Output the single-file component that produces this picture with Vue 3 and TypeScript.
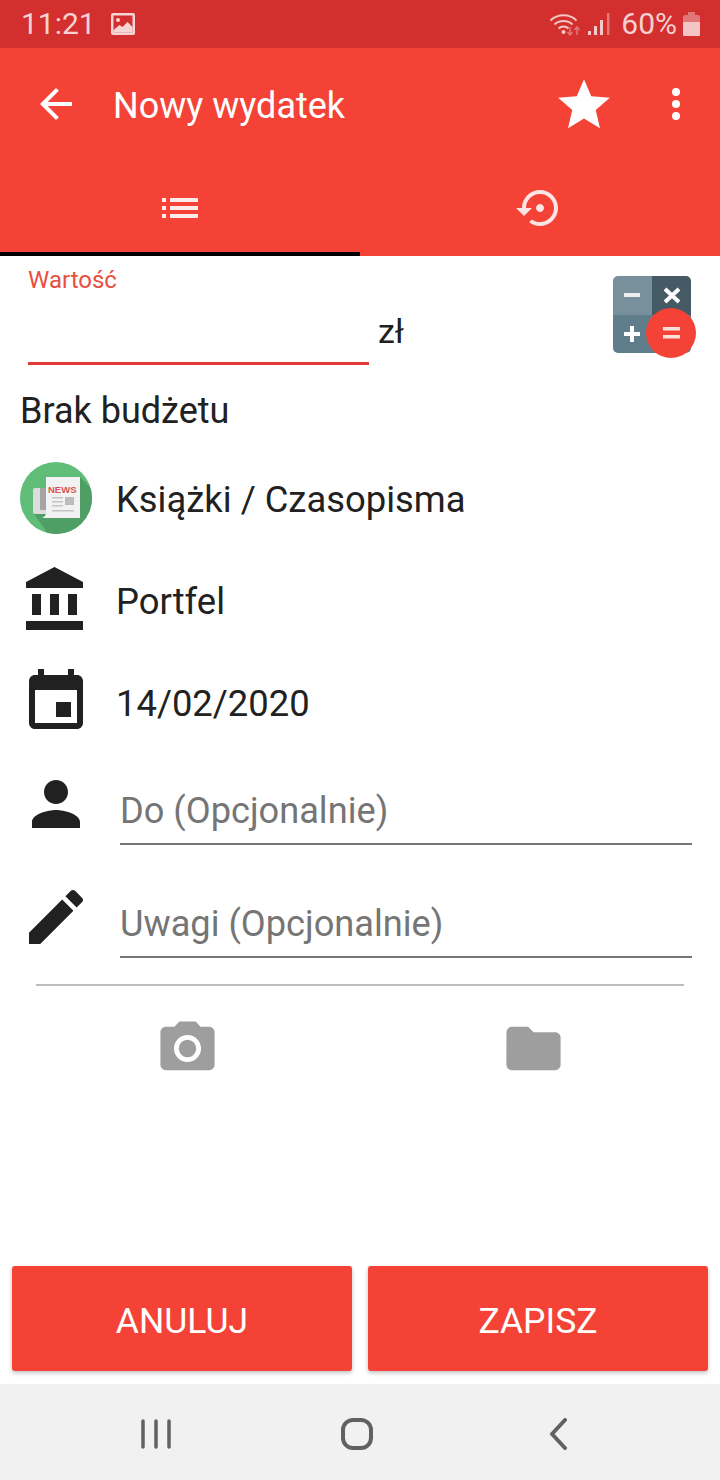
<script setup lang="ts">
interface DetailRow {
  label: string
  icon: string
}

const rows: DetailRow[] = [
  {
    label: 'Portfel',
    icon: 'M4 10v7h3v-7H4zm6 0v7h3v-7h-3zM2 22h19v-3H2v3zm14-12v7h3v-7h-3zm-4.5-9L2 6v2h19V6l-9.5-5z',
  },
  {
    label: '14/02/2020',
    icon: 'M17 12h-5v5h5v-5zM16 1v2H8V1H6v2H5c-1.11 0-1.99.9-1.99 2L3 19c0 1.1.89 2 2 2h14c1.1 0 2-.9 2-2V5c0-1.1-.9-2-2-2h-1V1h-2zm3 18H5V8h14v11z',
  },
]

const fields: DetailRow[] = [
  {
    label: 'Do (Opcjonalnie)',
    icon: 'M12 12c2.21 0 4-1.79 4-4s-1.79-4-4-4-4 1.79-4 4 1.79 4 4 4zm0 2c-2.67 0-8 1.34-8 4v2h16v-2c0-2.66-5.33-4-8-4z',
  },
  {
    label: 'Uwagi (Opcjonalnie)',
    icon: 'M3 17.25V21h3.75L17.81 9.94l-3.75-3.75L3 17.25zM20.71 7.04c.39-.39.39-1.02 0-1.41l-2.34-2.34c-.39-.39-1.02-.39-1.41 0l-1.83 1.83 3.75 3.75 1.83-1.83z',
  },
]
</script>

<template>
  <div class="page">
    <div class="status-bar">
      <span class="status-text">11:21</span>
      <svg class="status-pic" width="24" height="22" viewBox="0 0 24 22">
        <rect x="0" y="0" width="24" height="22" rx="2" fill="#fff" fill-opacity=".8" />
        <rect x="2.5" y="2.5" width="19" height="17" fill="#d32f2f" />
        <circle cx="7" cy="7" r="2" fill="#fff" fill-opacity=".8" />
        <path d="M2.5 17l6-5 3 2 5-5 5 5v5.5h-19z" fill="#fff" fill-opacity=".8" />
      </svg>
      <div class="status-right">
        <svg width="32" height="24" viewBox="0 0 32 24" fill="none">
          <path d="M1.5 8.5c7-7 19-7 26 0M5.5 12.5c4.8-4.6 13.2-4.6 18 0M9.5 16.5c2.8-2.6 7.2-2.6 10 0" stroke="#fff" stroke-opacity=".72" stroke-width="2" />
          <circle cx="14.500" cy="20" r="2" fill="#fff" fill-opacity=".75" />
          <path d="M21 15v8m-2.500-3l2.500 3 2.500-3" stroke="#fff" stroke-opacity=".35" stroke-width="1.500" />
          <path d="M28 23v-8m-2.500 3l2.500-3 2.500 3" stroke="#fff" stroke-opacity=".35" stroke-width="1.500" />
        </svg>
        <svg class="status-signal" width="24" height="24" viewBox="0 0 24 24">
          <rect x="1" y="19" width="3" height="4" fill="#fff" fill-opacity=".75" />
          <rect x="7" y="14" width="3" height="9" fill="#fff" fill-opacity=".75" />
          <rect x="13" y="8" width="3" height="15" fill="#fff" fill-opacity=".75" />
          <rect x="20" y="1" width="2.500" height="22" fill="#fff" fill-opacity=".35" />
        </svg>
        <span class="status-text percent">60%</span>
        <svg width="17" height="24" viewBox="0 0 17 24">
          <path d="M5 0h7v3h3a2 2 0 0 1 2 2v5H0V5a2 2 0 0 1 2-2h3z" fill="#fff" fill-opacity=".35" />
          <path d="M0 10h17v13a1 1 0 0 1-1 1H1a1 1 0 0 1-1-1z" fill="#fff" fill-opacity=".72" />
        </svg>
      </div>
    </div>

    <header class="toolbar">
      <svg class="back" width="48" height="48" viewBox="0 0 24 24" fill="#fff">
        <path d="M20 11H7.830l5.590-5.590L12 4l-8 8 8 8 1.410-1.410L7.830 13H20v-2z" />
      </svg>
      <h1 class="title">Nowy wydatek</h1>
      <svg class="star" width="62" height="62" viewBox="0 0 24 24" fill="#fff">
        <path d="M12 17.270L18.180 21l-1.640-7.030L22 9.240l-7.190-.610L12 2 9.190 8.630 2 9.240l5.460 4.730L5.820 21z" />
      </svg>
      <svg class="more" width="12" height="48" viewBox="0 0 12 48" fill="#fff">
        <circle cx="6" cy="12" r="4" />
        <circle cx="6" cy="24" r="4" />
        <circle cx="6" cy="36" r="4" />
      </svg>
    </header>

    <nav class="tabs">
      <div class="tab active">
        <svg width="48" height="48" viewBox="0 0 24 24" fill="#fff" fill-opacity=".9">
          <path d="M3 13h2v-2H3v2zm0 4h2v-2H3v2zm0-8h2V7H3v2zm4 4h14v-2H7v2zm0 4h14v-2H7v2zm0-10v2h14V7H7z" />
        </svg>
      </div>
      <div class="tab">
        <svg width="48" height="48" viewBox="0 0 24 24" fill="#fff" fill-opacity=".86">
          <path d="M14 12c0-1.100-.9-2-2-2s-2 .9-2 2 .9 2 2 2 2-.9 2-2zm-2-9c-4.970 0-9 4.030-9 9H0l4 4 4-4H5c0-3.870 3.130-7 7-7s7 3.130 7 7-3.130 7-7 7c-1.510 0-2.910-.49-4.060-1.300l-1.420 1.440C8.040 20.300 9.940 21 12 21c4.970 0 9-4.030 9-9s-4.030-9-9-9z" />
        </svg>
      </div>
    </nav>

    <section class="value-row">
      <div class="value-field">
        <span class="value-label">Wartość</span>
      </div>
      <span class="currency">zł</span>
      <svg class="calc" width="84" height="84" viewBox="0 0 84 84">
        <defs>
          <clipPath id="calc-clip">
            <rect x="0" y="0" width="78" height="77" rx="5" />
          </clipPath>
        </defs>
        <g clip-path="url(#calc-clip)">
          <rect x="0" y="0" width="39" height="39" fill="#78909c" />
          <rect x="39" y="0" width="39" height="39" fill="#455a64" />
          <rect x="0" y="39" width="78" height="39" fill="#607d8b" />
        </g>
        <rect x="11" y="17" width="16" height="4" fill="#eceff1" />
        <path d="M52 13l14 13M66 13L52 26" stroke="#fff" stroke-width="4" />
        <path d="M11 58h16M19 50v16" stroke="#fff" stroke-width="4" />
        <circle cx="58" cy="57" r="25" fill="#f44336" />
        <rect x="50" y="51" width="17" height="3.500" fill="#ffe0dc" />
        <rect x="50" y="59" width="17" height="3.500" fill="#ffe0dc" />
      </svg>
    </section>

    <div class="budget">Brak budżetu</div>

    <div class="detail-row first">
      <svg class="row-icon" width="72" height="72" viewBox="0 0 72 72">
        <defs>
          <clipPath id="news-clip">
            <circle cx="36" cy="36" r="36" />
          </clipPath>
        </defs>
        <circle cx="36" cy="36" r="36" fill="#5fbd78" />
        <path d="M60 15l14 14v43H28L14 52z" fill="#4f9e65" clip-path="url(#news-clip)" />
        <rect x="13" y="26" width="14" height="26" rx="2" fill="#dcdcdc" />
        <rect x="20" y="26" width="6" height="22" fill="#a5a5a5" />
        <path d="M26 15h34v41H22c3-1 4-3 4-6z" fill="#f2f2f2" />
        <text x="28" y="31" class="news-text">NEWS</text>
        <rect x="32" y="35" width="11" height="1.500" fill="#c4c4c4" />
        <rect x="32" y="39" width="11" height="1.500" fill="#c4c4c4" />
        <rect x="32" y="43" width="11" height="1.500" fill="#c4c4c4" />
        <rect x="32" y="48" width="22" height="1.500" fill="#c4c4c4" />
        <rect x="45" y="35" width="9" height="8" fill="#bdbdbd" />
      </svg>
      <span class="row-label">Książki / Czasopisma</span>
    </div>
    <div v-for="row in rows" :key="row.label" class="detail-row">
      <svg class="row-icon" width="72" height="72" viewBox="0 0 24 24" fill="#212121">
        <path :d="row.icon" />
      </svg>
      <span class="row-label">{{ row.label }}</span>
    </div>

    <div v-for="field in fields" :key="field.label" class="field-row">
      <svg class="field-icon" width="72" height="72" viewBox="0 0 24 24" fill="#212121">
        <path :d="field.icon" />
      </svg>
      <div class="field-input">{{ field.label }}</div>
    </div>

    <div class="divider"></div>

    <div class="attachments">
      <svg width="65" height="65" viewBox="0 0 24 24" fill="#9e9e9e">
        <circle cx="12" cy="12" r="3.200" />
        <path d="M9 2L7.170 4H4c-1.100 0-2 .9-2 2v12c0 1.100.9 2 2 2h16c1.100 0 2-.9 2-2V6c0-1.100-.9-2-2-2h-3.170L15 2H9zm3 15c-2.760 0-5-2.240-5-5s2.240-5 5-5 5 2.240 5 5-2.240 5-5 5z" />
      </svg>
      <svg width="65" height="65" viewBox="0 0 24 24" fill="#9e9e9e">
        <path d="M10 4H4c-1.100 0-1.990.9-1.990 2L2 18c0 1.100.9 2 2 2h16c1.100 0 2-.9 2-2V8c0-1.100-.9-2-2-2h-8l-2-2z" />
      </svg>
    </div>

    <div class="actions">
      <button class="action" type="button">ANULUJ</button>
      <button class="action" type="button">ZAPISZ</button>
    </div>

    <footer class="nav-bar">
      <svg width="32" height="32" viewBox="0 0 32 32" fill="none" stroke="#616161" stroke-width="3.500" stroke-linecap="round">
        <path d="M3 3v26M16 3v26M29 3v26" />
      </svg>
      <svg width="32" height="32" viewBox="0 0 32 32" fill="none" stroke="#616161" stroke-width="4">
        <rect x="2" y="2" width="28" height="28" rx="10" />
      </svg>
      <svg width="18" height="32" viewBox="0 0 18 32" fill="none" stroke="#616161" stroke-width="4" stroke-linecap="round" stroke-linejoin="round">
        <path d="M16 2L3 16l13 14" />
      </svg>
    </footer>
  </div>
</template>

<style scoped>
.page {
  position: relative;
  display: flex;
  flex-direction: column;
  width: 720px;
  height: 1480px;
  overflow: hidden;
  background: #fff;
  color: #212121;
  font-family: Roboto, "Liberation Sans", sans-serif;
}
.status-bar {
  display: flex;
  align-items: center;
  height: 48px;
  padding: 0 20px 0 21px;
  box-sizing: border-box;
  background: #d32f2f;
}
.status-text {
  color: rgba(255, 255, 255, 0.78);
  font-size: 30px;
  line-height: 48px;
}
.status-pic {
  margin-left: 15px;
}
.status-right {
  display: flex;
  align-items: center;
  margin-left: auto;
}
.status-signal {
  margin-left: 6px;
}
.percent {
  margin: 0 6px 0 10px;
}
.toolbar {
  display: flex;
  align-items: center;
  height: 112px;
  padding-left: 32px;
  box-sizing: border-box;
  background: #f44336;
}
.back {
  flex: none;
}
.title {
  margin: 4px 0 0 33px;
  color: #fff;
  font-size: 36px;
  font-weight: 400;
  line-height: 48px;
}
.star {
  margin-left: auto;
  margin-top: 2px;
}
.more {
  margin: 0 38px 0 55px;
}
.tabs {
  display: flex;
  height: 96px;
  background: #f44336;
}
.tab {
  flex: 1;
  display: flex;
  align-items: center;
  justify-content: center;
  box-sizing: border-box;
}
.tab.active {
  padding-top: 4px;
  border-bottom: 4px solid #000;
}
.value-row {
  display: flex;
  height: 124px;
  padding-left: 28px;
}
.value-field {
  box-sizing: border-box;
  width: 341px;
  height: 109px;
  border-bottom: 3px solid #e53935;
}
.value-label {
  display: block;
  margin-top: 10px;
  color: #e8503f;
  font-size: 24px;
  line-height: 28px;
}
.currency {
  margin: 54px 0 0 9px;
  font-size: 34px;
  line-height: 42px;
}
.calc {
  margin: 20px 23px 0 auto;
}
.budget {
  height: 60px;
  padding-left: 20px;
  font-size: 36px;
  line-height: 62px;
}
.detail-row {
  display: flex;
  align-items: center;
  height: 102px;
  padding-left: 20px;
}
.detail-row.first {
  margin-top: 7px;
}
.row-icon {
  flex: none;
}
.row-label {
  margin: 3px 0 0 24px;
  font-size: 36.400px;
}
.news-text {
  fill: #d9534f;
  font-family: "Liberation Sans", sans-serif;
  font-size: 9.500px;
  font-weight: 700;
}
.field-row {
  display: flex;
  height: 90px;
  margin-top: 23px;
  padding: 0 28px 0 20px;
}
.detail-row + .field-row {
  margin-top: 2px;
}
.field-icon {
  flex: none;
  margin-top: 13px;
}
.field-input {
  flex: 1;
  box-sizing: border-box;
  margin-left: 28px;
  padding-top: 35px;
  border-bottom: 2px solid #757575;
  color: #757575;
  font-size: 36.200px;
  line-height: 42px;
}
.divider {
  height: 2px;
  margin: 26px 36px 0;
  background: #bdbdbd;
}
.attachments {
  display: grid;
  grid-template-columns: 1fr 1fr;
  justify-items: center;
  margin-top: 30px;
  padding: 0 14px;
}
.actions {
  display: grid;
  grid-template-columns: 1fr 1fr;
  gap: 16px;
  margin-top: auto;
  padding: 0 12px 13px;
}
.action {
  height: 105px;
  padding: 4px 0 0;
  border: 0;
  border-radius: 3px;
  background: #f44336;
  box-shadow: 0 2px 4px rgba(0, 0, 0, 0.25);
  color: #fff;
  font-family: Roboto, "Liberation Sans", sans-serif;
  font-size: 35.500px;
  font-weight: 400;
}
.nav-bar {
  display: grid;
  grid-template-columns: repeat(3, 201px);
  justify-content: center;
  align-items: center;
  justify-items: center;
  height: 96px;
  padding: 4px 6px 0 0;
  box-sizing: border-box;
  background: #f1f1f1;
}
</style>
